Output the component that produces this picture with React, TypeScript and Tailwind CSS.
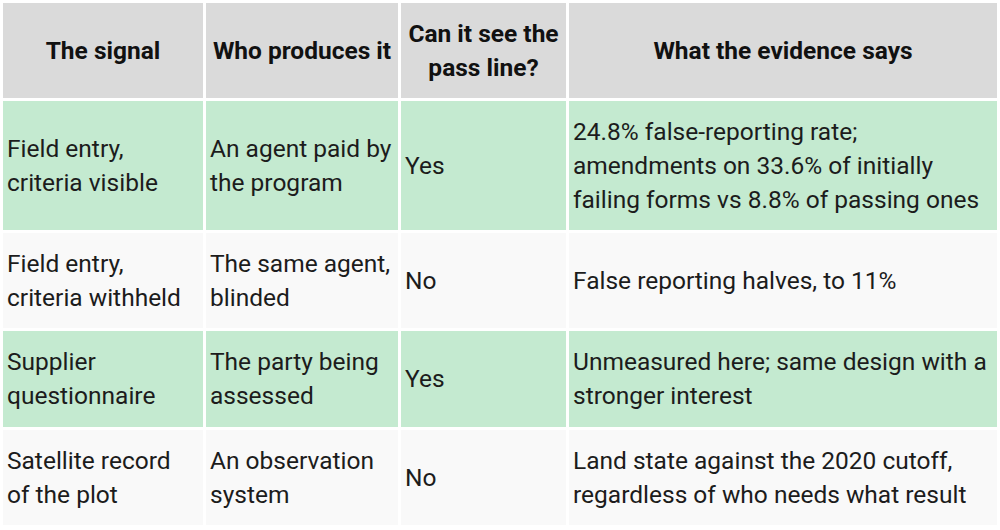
const header = ['The signal', 'Who produces it', 'Can it see the pass line?', 'What the evidence says'];

const rows: { cells: string[]; green: boolean }[] = [
  {
    cells: [
      'Field entry, criteria visible',
      'An agent paid by the program',
      'Yes',
      '24.8% false-reporting rate; amendments on 33.6% of initially failing forms vs 8.8% of passing ones',
    ],
    green: true,
  },
  {
    cells: ['Field entry, criteria withheld', 'The same agent, blinded', 'No', 'False reporting halves, to 11%'],
    green: false,
  },
  {
    cells: [
      'Supplier questionnaire',
      'The party being assessed',
      'Yes',
      'Unmeasured here; same design with a stronger interest',
    ],
    green: true,
  },
  {
    cells: [
      'Satellite record of the plot',
      'An observation system',
      'No',
      'Land state against the 2020 cutoff, regardless of who needs what result',
    ],
    green: false,
  },
];

const heights = ['h-[129px]', 'h-[95px]', 'h-[96px]', 'h-[95px]'];
const pads = ['pl-[4px] pr-[8px]', 'pl-[4px] pr-[3px]', 'pl-[4px] pr-[3px]', 'pl-[4px] pr-[3px]'];

export default function App() {
  return (
    <div className="w-[1000px] h-[530px] bg-white overflow-hidden" style={{ fontFamily: 'Roboto, "Liberation Sans", sans-serif' }}>
      <table className="table-fixed border-separate border-spacing-[3px] w-[1000px] text-[24.5px] leading-[34px] text-[#1c1c1c]">
        <colgroup>
          <col className="w-[200px]" />
          <col className="w-[192px]" />
          <col className="w-[165px]" />
          <col className="w-[428px]" />
        </colgroup>
        <thead>
          <tr className="h-[95px]">
            {header.map((h) => (
              <th key={h} className="bg-[#dadada] px-[3px] font-bold text-center align-middle leading-[34px] text-[#111]">
                {h === 'Can it see the pass line?' ? (
                  <>
                    Can it see the
                    <br />
                    pass line?
                  </>
                ) : (
                  h
                )}
              </th>
            ))}
          </tr>
        </thead>
        <tbody>
          {rows.map((row, i) => (
            <tr key={i} className={heights[i]}>
              {row.cells.map((c, j) => (
                <td
                  key={j}
                  className={`${row.green ? 'bg-[#c4ead0]' : 'bg-[#f9f9f9]'} ${pads[j]} align-middle text-left`}
                >
                  {c}
                </td>
              ))}
            </tr>
          ))}
        </tbody>
      </table>
    </div>
  );
}
